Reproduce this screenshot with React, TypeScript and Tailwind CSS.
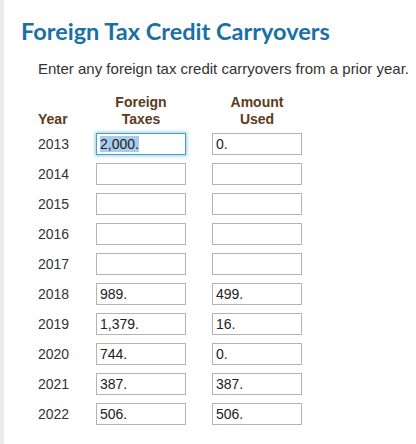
import React from 'react';

const rows: { year: string; foreign: string; used: string }[] = [
  { year: '2013', foreign: '2,000.', used: '0.' },
  { year: '2014', foreign: '', used: '' },
  { year: '2015', foreign: '', used: '' },
  { year: '2016', foreign: '', used: '' },
  { year: '2017', foreign: '', used: '' },
  { year: '2018', foreign: '989.', used: '499.' },
  { year: '2019', foreign: '1,379.', used: '16.' },
  { year: '2020', foreign: '744.', used: '0.' },
  { year: '2021', foreign: '387.', used: '387.' },
  { year: '2022', foreign: '506.', used: '506.' },
];

const Field: React.FC<{ value: string; focused?: boolean }> = ({ value, focused }) => (
  <div
    className={`h-[22px] w-[90px] flex items-center px-[3px] text-[14px] text-[#222] bg-white border ${
      focused ? 'border-[#4a9fd4] shadow-[0_0_3px_1px_rgba(90,170,220,0.6)]' : 'border-[#b4b4b4]'
    }`}
  >
    {focused ? <span className="bg-[#a8ccee] leading-[16px]">{value}</span> : value}
  </div>
);

export default function App() {
  return (
    <div className="flex w-[416px] h-[444px] bg-white overflow-hidden" style={{ fontFamily: '"Liberation Sans", Arial, sans-serif' }}>
      <div className="w-[4px] shrink-0 bg-[#ebebeb]" />
      <div className="flex flex-col pl-[17px]">
        <h1 className="mt-[16px] text-[23.5px] leading-[30px] font-bold text-[#1b6fa6]" style={{ fontFamily: 'Lato, "Open Sans", sans-serif' }}>
          Foreign Tax Credit Carryovers
        </h1>
        <p className="mt-[14px] pl-[17px] text-[15px] leading-[18px] text-[#333]">
          Enter any foreign tax credit carryovers from a prior year.
        </p>
        <div className="mt-[16px] pl-[17px] flex flex-col">
          <div className="mb-[5px] grid grid-cols-[58px_90px_26px_90px] items-end text-[14px] leading-[17px] font-bold text-[#5c3a20]">
            <div>Year</div>
            <div className="text-center">Foreign<br />Taxes</div>
            <div />
            <div className="text-center">Amount<br />Used</div>
          </div>
          <div className="flex flex-col gap-[8px]">
            {rows.map((r, i) => (
              <div key={r.year} className="grid grid-cols-[58px_90px_26px_90px] items-center">
                <div className="text-[14px] text-[#333]">{r.year}</div>
                <Field value={r.foreign} focused={i === 0} />
                <div />
                <Field value={r.used} />
              </div>
            ))}
          </div>
        </div>
      </div>
    </div>
  );
}
